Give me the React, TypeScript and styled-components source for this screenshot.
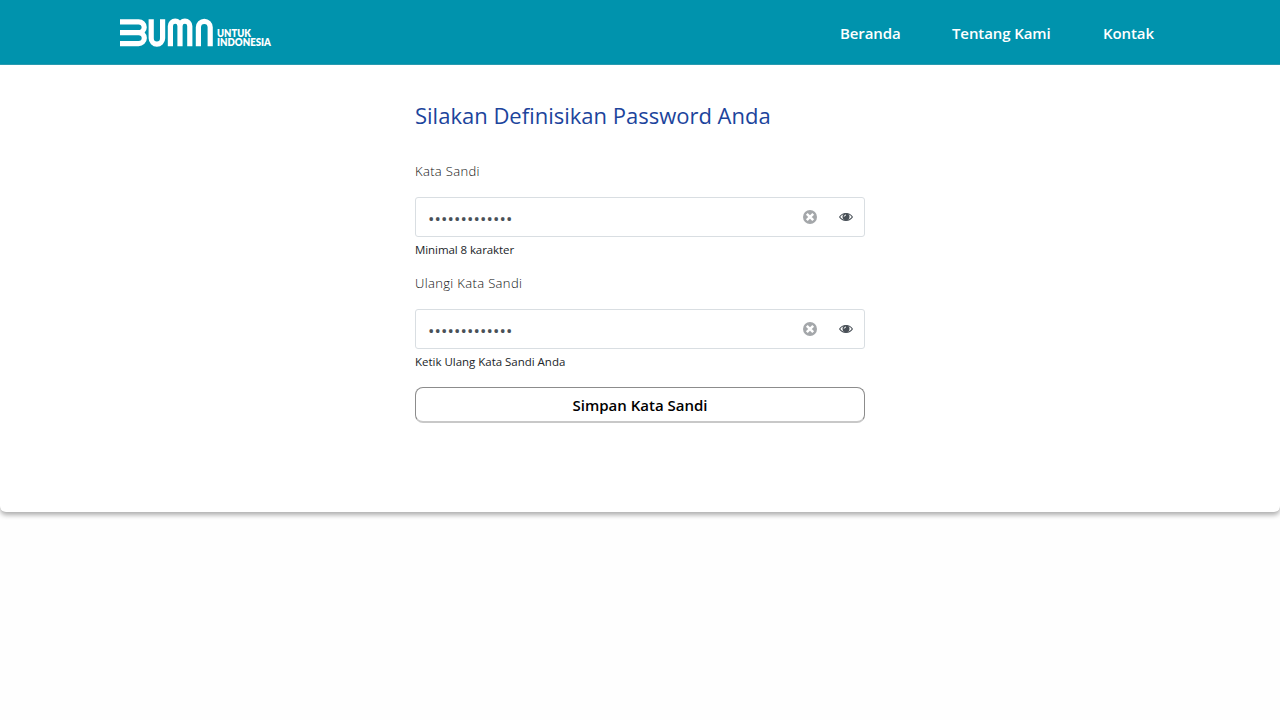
import React from "react";
import styled, { createGlobalStyle } from "styled-components";

const Global = createGlobalStyle`
  * { box-sizing: border-box; }
  body { margin: 0; background: #fff; font-family: "Open Sans", "Noto Sans", sans-serif; }
`;
const Page = styled.div`min-height: 100vh; background: #fefefe;`;
const Header = styled.header`
  height: 65px; padding: 0 126px 0 120px; background: #0093ad;
  border-bottom: 1px solid #2a9fb5;
  display: flex; align-items: center; justify-content: space-between;
`;
const Logo = styled.svg`display: block; width: 156px; height: 32px; margin-top: 2px;`;
const Nav = styled.nav`display: flex; gap: 52px; padding-top: 1px;`;
const NavLink = styled.a<{ $w: number }>`
  width: ${p => p.$w}px; white-space: nowrap; color: #fff; font-size: 15px; font-weight: 600; line-height: 24px;
  letter-spacing: -0.1px;
`;
const Panel = styled.main`
  height: 447px; background: #fff; border-radius: 0 0 6px 6px;
  box-shadow: 0 3px 5px rgba(0, 0, 0, 0.32);
  display: flex; justify-content: center;
`;
const Form = styled.form`width: 450px; padding-top: 33px; display: flex; flex-direction: column;`;
const Title = styled.h1`
  margin: 0 0 29px; color: #1c449c; font-size: 22px; font-weight: 400; line-height: 34px; white-space: nowrap;
`;
const Field = styled.div`height: 112px; display: flex; flex-direction: column;`;
const Label = styled.label<{ $spacing?: number }>`
  margin-bottom: 16px; color: #111; font-size: 13px; font-weight: 300; line-height: 20px;
  letter-spacing: ${p => p.$spacing ?? 0}px;
`;
const InputBox = styled.div`
  height: 40px; flex: none; border: 1px solid #d9dee2; border-radius: 3px; background: #fff;
  display: flex; align-items: center; padding: 0 10px 0 12px;
`;
const Input = styled.input`
  flex: 1; min-width: 0; border: 0; outline: 0; padding: 3px 0 0; background: none; color: #495057;
  font: 17px "Open Sans", sans-serif; letter-spacing: 0.1px;
`;
const Icon = styled.svg<{ $gap?: number }>`display: block; flex: none; margin-right: ${p => p.$gap ?? 0}px;`;
const Hint = styled.small<{ $spacing?: number }>`
  color: #212529; font-size: 11.5px; line-height: 18px; margin-top: 4px; letter-spacing: ${p => p.$spacing ?? 0}px;
`;
const Submit = styled.button`
  height: 36px; margin-top: 2px; border: 1px solid #8c8c8c; border-bottom: 2px solid #c8c8c8; border-radius: 8px; background: #fff;
  color: #000; font: 600 15px/24px "Open Sans", sans-serif; padding: 1px 0 0;
`;

const ClearIcon = () => (
  <Icon width="14" height="14" viewBox="0 0 14 14" $gap={21}>
    <circle cx="7" cy="7" r="7" fill="#a4a7aa" />
    <path d="M3.8 3.8 10.2 10.2M10.2 3.8 3.8 10.2" stroke="#fff" strokeWidth="2.5" />
  </Icon>
);
const EyeIcon = () => (
  <Icon width="16" height="12" viewBox="0 0 16 12">
    <path d="M1.6 6C4.4 1.3 11.6 1.3 14.4 6 11.6 10.5 4.4 10.5 1.6 6Z" fill="#fff" stroke="#495057" strokeWidth="1.1" />
    <circle cx="8" cy="5.8" r="3.5" fill="#495057" />
    <path d="M6.2 5.6A1.8 1.8 0 0 1 8 4" stroke="#fff" strokeWidth="1" fill="none" />
  </Icon>
);

interface FieldProps { id: string; label: string; hint: string; labelSpacing: number; hintSpacing: number }

function PasswordField({ id, label, hint, labelSpacing, hintSpacing }: FieldProps) {
  return (
    <Field>
      <Label htmlFor={id} $spacing={labelSpacing}>{label}</Label>
      <InputBox>
        <Input id={id} type="password" defaultValue="katasandi1234" />
        <ClearIcon />
        <EyeIcon />
      </InputBox>
      <Hint $spacing={hintSpacing}>{hint}</Hint>
    </Field>
  );
}

export default function App() {
  return (
    <Page>
      <Global />
      <Header>
        <Logo viewBox="0 0 156 32" fill="none" stroke="#fff" strokeWidth="5.2">
          <path d="M0 4.8H18.6A5.6 5.4 0 0 1 18.6 15.6H0M18.6 15.6A5.6 5.4 0 0 1 18.6 26.6H0" />
          <path d="M31.2 2.2V21.2A5.7 5.9 0 0 0 42.6 21.2V2.2" />
          <path d="M50.4 29.2V9A4.8 4.8 0 0 1 60 9V29.2M60 9A4.8 4.8 0 0 1 69.8 9V29.2" />
          <path d="M78.4 29.2V10.3A5.9 6 0 0 1 90.2 10.3V29.2" />
          <g fill="#fff" stroke="none" fontFamily="Lato, sans-serif" fontWeight="800" fontSize="10.5">
            <text x="97" y="19.6" textLength="34" lengthAdjust="spacingAndGlyphs">UNTUK</text>
            <text x="97" y="29.4" textLength="54" lengthAdjust="spacingAndGlyphs">INDONESIA</text>
          </g>
        </Logo>
        <Nav>
          <NavLink $w={60}>Beranda</NavLink>
          <NavLink $w={99}>Tentang Kami</NavLink>
          <NavLink $w={51}>Kontak</NavLink>
        </Nav>
      </Header>
      <Panel>
        <Form>
          <Title>Silakan Definisikan Password Anda</Title>
          <PasswordField id="password" label="Kata Sandi" hint="Minimal 8 karakter" labelSpacing={0.35} hintSpacing={-0.08} />
          <PasswordField id="confirm" label="Ulangi Kata Sandi" hint="Ketik Ulang Kata Sandi Anda" labelSpacing={0.35} hintSpacing={-0.02} />
          <Submit type="button">Simpan Kata Sandi</Submit>
        </Form>
      </Panel>
    </Page>
  );
}
